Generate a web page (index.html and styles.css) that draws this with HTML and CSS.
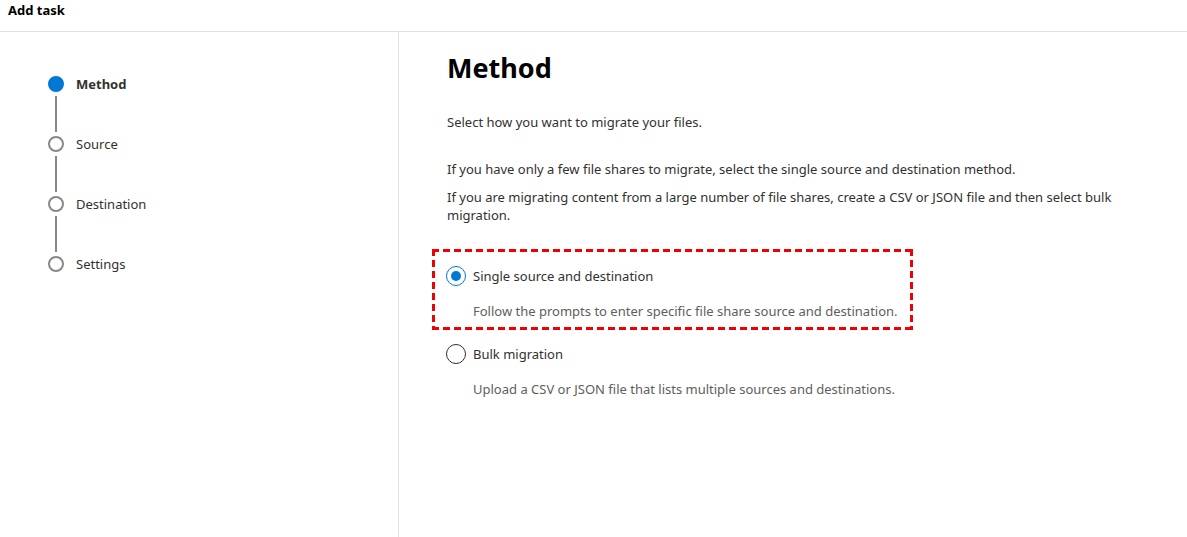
FILE: index.html
```html
<!DOCTYPE html>
<html>
<head>
<meta charset="utf-8">
<link rel="stylesheet" href="styles.css">
</head>
<body>
<header class="topbar">Add task</header>
<div class="layout">
  <nav class="steps">
    <div class="step active"><span class="dot"></span><span class="label">Method</span></div>
    <div class="connector"></div>
    <div class="step"><span class="dot"></span><span class="label">Source</span></div>
    <div class="connector"></div>
    <div class="step"><span class="dot"></span><span class="label">Destination</span></div>
    <div class="connector"></div>
    <div class="step"><span class="dot"></span><span class="label">Settings</span></div>
  </nav>
  <main class="content">
    <h1 class="title">Method</h1>
    <p class="intro">Select how you want to migrate your files.</p>
    <p class="para first">If you have only a few file shares to migrate, select the single source and destination method.</p>
    <p class="para">If you are migrating content from a large number of file shares, create a CSV or JSON file and then select bulk migration.</p>
    <div class="options">
      <div class="option highlight">
        <div class="opt-row"><span class="radio checked"></span><span class="opt-label">Single source and destination</span></div>
        <div class="opt-desc">Follow the prompts to enter specific file share source and destination.</div>
      </div>
      <div class="option">
        <div class="opt-row"><span class="radio"></span><span class="opt-label">Bulk migration</span></div>
        <div class="opt-desc">Upload a CSV or JSON file that lists multiple sources and destinations.</div>
      </div>
    </div>
  </main>
</div>
</body>
</html>
```
FILE: styles.css
```css
* { box-sizing: border-box; }
html, body { margin: 0; padding: 0; height: 100%; }
body {
  font-family: "Noto Sans", "Open Sans", sans-serif;
  font-size: 13px;
  color: #323130;
  background: #fff;
  display: flex;
  flex-direction: column;
}
.topbar {
  height: 32px;
  padding: 1px 8px 0;
  font-weight: 700;
  font-size: 13px;
  color: #000;
  border-bottom: 1px solid #e1e1e1;
  line-height: 18px;
}
.layout {
  flex: 1;
  display: flex;
}
.steps {
  width: 399px;
  border-right: 1px solid #e1e1e1;
  padding: 44px 0 0 48px;
  display: flex;
  flex-direction: column;
}
.step {
  display: flex;
  align-items: center;
  height: 16px;
}
.dot {
  width: 16px;
  height: 16px;
  border-radius: 50%;
  border: 2px solid #8a8886;
  background: #fff;
  flex: none;
}
.step.active .dot { background: #0078d4; border-color: #0078d4; }
.label {
  margin-left: 12px;
  font-size: 13px;
  color: #323130;
}
.step.active .label { font-weight: 700; }
.connector {
  width: 2px;
  height: 36px;
  margin: 4px 0 4px 7px;
  background: #8a8886;
}
.content {
  flex: 1;
  padding: 16px 0 0 48px;
}
.title {
  margin: 0;
  font-size: 27px;
  font-weight: 700;
  color: #000;
  line-height: 40px;
}
.intro { margin: 25px 0 0; line-height: 18px; }
.para { margin: 10px 0 0; line-height: 18px; max-width: 690px; }
.para.first { margin-top: 29px; }
.options {
  margin-top: 25px;
  margin-left: -15px;
  display: flex;
  flex-direction: column;
}
.option {
  width: 481px;
  padding: 14px 14px 7px 14px;
  white-space: nowrap;
}
.option.highlight {
  padding: 17px 14px 10px 14px;
  background:
    repeating-linear-gradient(90deg, #f00000 0 7px, transparent 7px 11px) left top / 100% 3px no-repeat,
    repeating-linear-gradient(90deg, #f00000 0 7px, transparent 7px 11px) left bottom / 100% 3px no-repeat,
    repeating-linear-gradient(180deg, #f00000 0 7px, transparent 7px 11px) left top / 3px 100% no-repeat,
    repeating-linear-gradient(180deg, #f00000 0 7px, transparent 7px 11px) right top / 3px 100% no-repeat;
}
.opt-row {
  display: flex;
  align-items: center;
  height: 20px;
}
.radio {
  width: 20px;
  height: 20px;
  border-radius: 50%;
  border: 1px solid #323130;
  flex: none;
  position: relative;
  background: #fff;
}
.radio.checked { border-color: #0078d4; }
.radio.checked::after {
  content: "";
  position: absolute;
  left: 4px; top: 4px;
  width: 10px; height: 10px;
  border-radius: 50%;
  background: #0078d4;
}
.opt-label { margin-left: 7px; }
.opt-desc {
  margin: 16px 0 0 27px;
  color: #605e5c;
  line-height: 18px;
}
```
